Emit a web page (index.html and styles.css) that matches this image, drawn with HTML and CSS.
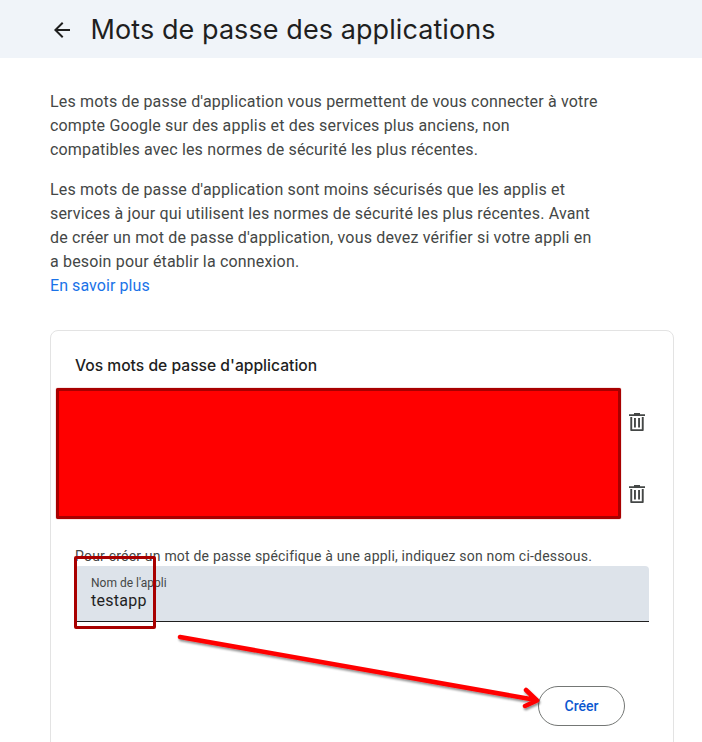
FILE: index.html
```html
<!DOCTYPE html>
<html lang="fr">
<head>
<meta charset="utf-8">
<title>Mots de passe des applications</title>
<link rel="stylesheet" href="styles.css">
</head>
<body>
<div class="page">
  <header class="topbar">
    <svg class="back" viewBox="0 0 24 24" width="24" height="24"><path d="M20 11H7.830l5.590-5.590L12 4l-8 8 8 8 1.410-1.410L7.830 13H20z"/></svg>
    <h1 class="title">Mots de passe des applications</h1>
  </header>
  <main class="content">
    <p class="para">Les mots de passe d'application vous permettent de vous connecter à votre compte Google sur des applis et des services plus anciens, non compatibles avec les normes de sécurité les plus récentes.</p>
    <p class="para">Les mots de passe d'application sont moins sécurisés que les applis et services à jour qui utilisent les normes de sécurité les plus récentes. Avant de créer un mot de passe d'application, vous devez vérifier si votre appli en a besoin pour établir la connexion.<br><a class="link" href="#">En savoir plus</a></p>
    <section class="card">
      <h2 class="card-title">Vos mots de passe d'application</h2>
      <div class="rows">
        <div class="row">
          <svg class="trash" viewBox="0 0 18 20" width="18" height="20"><path d="M6 1h6v1.200h5v1.800H1V2.200h5z M2.300 5h1.900v12.200h9.600V5h1.900v13c0 .6-.4 1-1 1H3.300c-.6 0-1-.4-1-1z M6 6h1.900v9.500H6z M10.100 6H12v9.500h-1.900z"/></svg>
        </div>
        <div class="row">
          <svg class="trash" viewBox="0 0 18 20" width="18" height="20"><path d="M6 1h6v1.200h5v1.800H1V2.200h5z M2.300 5h1.900v12.200h9.600V5h1.900v13c0 .6-.4 1-1 1H3.300c-.6 0-1-.4-1-1z M6 6h1.900v9.500H6z M10.100 6H12v9.500h-1.900z"/></svg>
        </div>
      </div>
      <p class="hint">Pour créer un mot de passe spécifique à une appli, indiquez son nom ci-dessous.</p>
      <div class="field">
        <span class="field-label">Nom de l'appli</span>
        <span class="field-value">testapp</span>
      </div>
      <div class="actions"><button class="create">Créer</button></div>
    </section>
  </main>
  <div class="redact"></div>
  <div class="marker"></div>
  <svg class="arrow" viewBox="0 0 702 742" width="702" height="742">
    <defs><filter id="sh" x="-10%" y="-30%" width="120%" height="160%"><feDropShadow dx="1" dy="2" stdDeviation="1.200" flood-color="#000" flood-opacity=".45"/></filter></defs>
    <path d="M180 637L536 700M526 690L537 700.500L525 706" fill="none" stroke="#f00" stroke-width="4.500" stroke-linecap="round" stroke-linejoin="round" filter="url(#sh)"/>
  </svg>
</div>
</body>
</html>
```
FILE: styles.css
```css
* { box-sizing: border-box; }
html, body { margin: 0; padding: 0; background: #fff; }
.page { position: relative; width: 702px; height: 742px; overflow: hidden; font-family: Roboto, "Liberation Sans", sans-serif; color: #444746; }
.topbar { height: 58px; background: #f0f4f9; display: flex; align-items: center; padding: 2px 0 0 50px; gap: 16.500px; }
.back { fill: #1f1f1f; flex: none; }
.title { margin: 0; font-family: Inter, Roboto, sans-serif; font-weight: 400; font-size: 27px; line-height: 56px; letter-spacing: .08px; color: #1f1f1f; }
.content { padding: 32px 28px 0 50px; }
.para { margin: 0 0 16px; font-size: 16px; line-height: 24px; width: 552px; letter-spacing: .17px; }
.link { color: #1a73e8; text-decoration: none; letter-spacing: .07px; }
.card { margin-top: 32px; border: 1px solid #e3e3e3; border-radius: 8px; padding: 0 24px 24px; height: 440px; }
.card-title { margin: 0; padding-top: 23px; font-family: Inter, Roboto, sans-serif; font-size: 15.650px; line-height: 24px; font-weight: 500; color: #1f1f1f; }
.rows { display: flex; flex-direction: column; height: 144px; margin-top: 8px; }
.row { height: 72px; display: flex; align-items: center; justify-content: flex-end; padding-right: 27px; margin-right: -24px; flex: none; }
.trash { fill: #444746; display: block; }
.hint { margin: 16px 0 0; font-size: 14px; line-height: 20px; letter-spacing: .2px; }
.field { margin-top: 0; height: 56px; width: 574px; background: #dde3ea; border-bottom: 1px solid #1f1f1f; border-radius: 4px 4px 0 0; padding: 9px 16px 0; display: flex; flex-direction: column; }
.field-label { font-size: 12px; line-height: 16px; }
.field-value { font-size: 16px; line-height: 20px; color: #1f1f1f; margin-top: 0; letter-spacing: .28px; }
.actions { display: flex; justify-content: flex-end; margin-top: 64px; width: 574px; padding-right: 24px; }
.create { width: 87px; height: 40px; border: 1px solid #747775; border-radius: 20px; background: #fff; color: #0b57d0; font: 500 14px/20px Roboto, sans-serif; padding: 0; }
.redact { position: absolute; left: 56px; top: 388px; width: 565px; height: 131px; background: #f00; border: 3px solid #a80000; border-radius: 2px; box-shadow: 0 0 1px #a80000; }
.marker { position: absolute; left: 74px; top: 556px; width: 82px; height: 73px; border: 3px solid #a80000; border-radius: 2px; }
.arrow { position: absolute; left: 0; top: 0; pointer-events: none; }
```
